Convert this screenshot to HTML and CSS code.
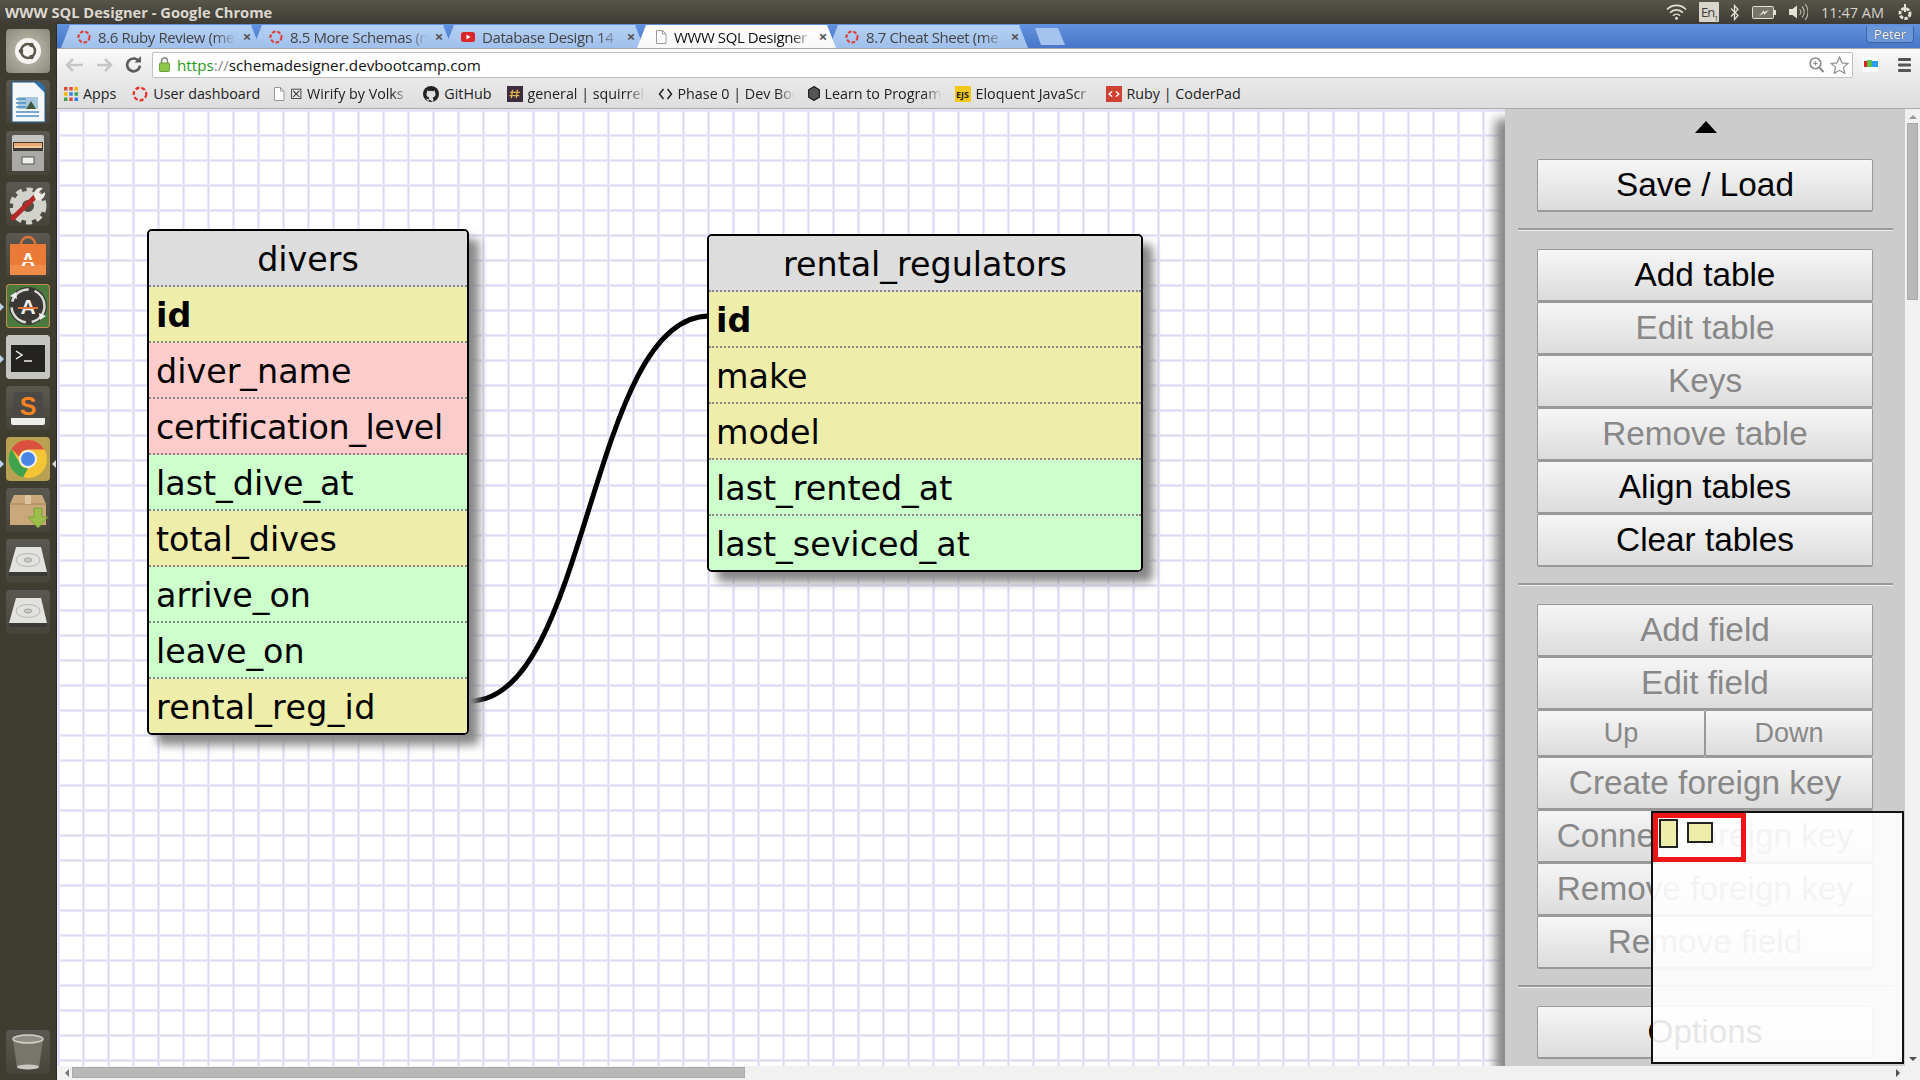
FILE: index.html
```html
<!DOCTYPE html>
<html lang="en">
<head>
  <meta charset="UTF-8">
  <title>WWW SQL Designer - Google Chrome</title>
  <link rel="stylesheet" href="styles.css">
</head>
<body>
  <!-- desktop top bar -->
  <header class="titlebar">
    <span class="title">WWW SQL Designer - Google Chrome</span>
    <div class="tray">
      <svg class="tray-wifi" width="21" height="16" viewBox="0 0 21 16"><g fill="none" stroke="#e4e0d8" stroke-width="1.600"><path d="M1 5.500a13 13 0 0 1 19 0"/><path d="M4 8.700a9 9 0 0 1 13 0"/><path d="M7 11.700a5 5 0 0 1 7 0"/></g><circle cx="10.500" cy="14.300" r="1.500" fill="#e4e0d8"/></svg>
      <span class="tray-lang">En<sub>1</sub></span>
      <svg class="tray-bt" width="9" height="17" viewBox="0 0 9 17"><path d="M1 4.500l7 7-3.500 4V1.500L8 5.500l-7 7" fill="none" stroke="#e4e0d8" stroke-width="1.300"/></svg>
      <svg class="tray-batt" width="24" height="13" viewBox="0 0 24 13"><rect x=".5" y=".5" width="21" height="12" rx="1" fill="#77746a" stroke="#e4e0d8"/><rect x="22" y="4" width="2" height="5" fill="#e4e0d8"/><path d="M7 10l5-3v2l5-5-5 2V4z" fill="#e4e0d8"/></svg>
      <svg class="tray-vol" width="20" height="18" viewBox="0 0 20 18"><path d="M1 6h3.500L9 2.500v13L4.500 12H1z" fill="#e4e0d8"/><g fill="none" stroke="#b9b5ac" stroke-width="1.100"><path d="M11.500 6a4.500 4.500 0 0 1 0 6"/><path d="M14 3.500a8 8 0 0 1 0 11"/><path d="M17 1a12 12 0 0 1 0 16"/></g></svg>
      <span class="tray-time">11:47 AM</span>
      <svg class="tray-power" width="16" height="17" viewBox="0 0 16 17"><circle cx="8" cy="9.500" r="5" fill="none" stroke="#e4e0d8" stroke-width="3" stroke-dasharray="3.500 1.300"/><rect x="7" y="0" width="2" height="8" fill="#e4e0d8"/></svg>
    </div>
  </header>

  <div class="desktop">
    <!-- launcher -->
    <nav class="launcher">
      <div class="tile tile-home">
        <svg width="44" height="44" viewBox="0 0 44 44"><circle cx="22" cy="22" r="13" fill="#f6f5f2"/><circle cx="22" cy="22" r="7" fill="none" stroke="#5a574d" stroke-width="2.500"/><g fill="#5a574d"><circle cx="15" cy="22" r="2.300"/><circle cx="25.500" cy="16" r="2.300"/><circle cx="25.500" cy="28" r="2.300"/></g></svg>
      </div>
      <div class="tile">
        <svg width="44" height="44" viewBox="0 0 44 44"><path d="M6 2h26l7 7v33H6z" fill="#f4f6f8" stroke="#1d5c93" stroke-width="1"/><path d="M28 2h6l5 5v6z" fill="#2a72ad"/><rect x="12" y="17" width="20" height="12" fill="#a5c8de"/><path d="M20 29l5-8 5 8z" fill="#3f5a40"/><g stroke="#4f8fbe" stroke-width="1.500"><path d="M10 19h10"/><path d="M10 23h10"/><path d="M10 27h10"/><path d="M10 32h23"/><path d="M10 36h23"/></g></svg>
      </div>
      <div class="tile">
        <svg width="44" height="44" viewBox="0 0 44 44"><rect x="6" y="4" width="32" height="36" rx="2" fill="#c4c4c0"/><rect x="7" y="11" width="30" height="9" fill="#3f3a33"/><rect x="8" y="12" width="28" height="3" fill="#eaa76e"/><rect x="8" y="15" width="28" height="2" fill="#f2c79a"/><rect x="6" y="20" width="32" height="20" rx="1" fill="#a9a9a6"/><rect x="16" y="26" width="12" height="7" fill="#efefec" stroke="#555" stroke-width="1"/></svg>
      </div>
      <div class="tile">
        <svg width="44" height="44" viewBox="0 0 44 44"><circle cx="22" cy="24" r="10.500" fill="none" stroke="#d2d2cd" stroke-width="9"/><circle cx="22" cy="24" r="16" fill="none" stroke="#d2d2cd" stroke-width="5" stroke-dasharray="6 4.500"/><path d="M7 36L32 12" stroke="#b32a28" stroke-width="5" stroke-linecap="round"/><path d="M28 14a7 7 0 0 1 9-8l-4 4 2 3 4-3a7 7 0 0 1-9 8z" fill="#ecebe8"/></svg>
      </div>
      <div class="tile">
        <svg width="44" height="44" viewBox="0 0 44 44"><path d="M15 11a7 7 0 0 1 14 0" fill="none" stroke="#d8733a" stroke-width="2.500"/><path d="M4 11h36v31H4z" fill="#ea7a36"/><path d="M4 32h36v10H4z" fill="#f08c4a"/><text class="tile-letter" x="22" y="33" font-size="19" fill="#fff">A</text><rect x="11" y="27" width="22" height="2" fill="#ea7a36"/></svg>
      </div>
      <div class="tile tile-updater">
        <svg width="44" height="44" viewBox="0 0 44 44"><circle cx="22" cy="22" r="19" fill="#3a3834"/><circle cx="22" cy="22" r="16.500" fill="none" stroke="#d8d8d4" stroke-width="2.500" stroke-dasharray="22 6"/><path d="M4 12l6-4 1 7z" fill="#eee"/><path d="M40 32l-6 4-1-7z" fill="#eee"/><text class="tile-letter" x="22" y="30" font-size="21" fill="#f3f1ec">A</text><rect x="12" y="23" width="20" height="2" fill="#e2733b"/></svg>
      </div>
      <div class="tile tile-terminal">
        <svg width="44" height="44" viewBox="0 0 44 44"><rect x="0" y="0" width="44" height="44" rx="4" fill="#c4c4c0"/><rect x="5" y="10" width="34" height="27" fill="#24231f"/><path d="M10 16l6 4-6 4" fill="none" stroke="#f0f0ee" stroke-width="1.500"/><path d="M18 26h8" stroke="#f0f0ee" stroke-width="1.500"/></svg>
      </div>
      <div class="tile">
        <svg width="44" height="44" viewBox="0 0 44 44"><path d="M8 6h28l3 26H5z" fill="#4a4945"/><path d="M5 32h34v5a2 2 0 0 1-2 2H7a2 2 0 0 1-2-2z" fill="#eeeeea"/><text class="tile-letter" x="22" y="29" font-size="25" fill="#f5821f">S</text></svg>
      </div>
      <div class="tile tile-chrome">
        <svg width="44" height="44" viewBox="0 0 44 44"><circle cx="22" cy="22" r="19" fill="#f4c534"/><path d="M22 3a19 19 0 0 1 16.500 9.500H22a9.500 9.500 0 0 0-9 7L5.500 12A19 19 0 0 1 22 3z" fill="#d9503f"/><path d="M5.500 12L13 25a9.500 9.500 0 0 0 9 6.500L17 40.400A19 19 0 0 1 5.500 12z" fill="#3fa34d"/><circle cx="22" cy="22" r="9" fill="#f4f4f4"/><circle cx="22" cy="22" r="7" fill="#4a86e8"/></svg>
      </div>
      <div class="tile">
        <svg width="44" height="44" viewBox="0 0 44 44"><path d="M8 7h28l4 9v21H4V16z" fill="#c9a97a"/><path d="M4 16h36" stroke="#a5855a" stroke-width="1"/><rect x="19" y="7" width="6" height="9" fill="#dcc59e"/><path d="M28 20h8v9h6L32 40 22 29h6z" fill="#9bbf4a" stroke="#7a9a35" stroke-width=".8"/></svg>
      </div>
      <div class="tile">
        <svg width="44" height="44" viewBox="0 0 44 44"><path d="M10 8h25l6 25H3z" fill="#e2e2de"/><path d="M3 33h38v4H3z" fill="#3a3935"/><ellipse cx="22" cy="21" rx="12" ry="6.500" fill="none" stroke="#b4b4b0"/><ellipse cx="22" cy="21" rx="4" ry="2" fill="#c8c8c4" stroke="#a5a5a1"/></svg>
      </div>
      <div class="tile">
        <svg width="44" height="44" viewBox="0 0 44 44"><path d="M10 8h25l6 25H3z" fill="#e2e2de"/><path d="M3 33h38v4H3z" fill="#3a3935"/><ellipse cx="22" cy="21" rx="12" ry="6.500" fill="none" stroke="#b4b4b0"/><ellipse cx="22" cy="21" rx="4" ry="2" fill="#c8c8c4" stroke="#a5a5a1"/></svg>
      </div>
      <div class="tile tile-trash">
        <svg width="44" height="44" viewBox="0 0 44 44"><path d="M7 9l4 29a18 4 0 0 0 22 0l4-29z" fill="#77766c"/><ellipse cx="22" cy="9" rx="15" ry="4" fill="#8f8e85" stroke="#d2d1ca" stroke-width="1.500"/><ellipse cx="22" cy="37" rx="11" ry="2.500" fill="#c9c8c1"/></svg>
      </div>
      <i class="pip pip-l pip-updater"></i>
      <i class="pip pip-l pip-terminal"></i>
      <i class="pip pip-l pip-chrome"></i>
      <i class="pip pip-r pip-chrome"></i>
    </nav>

    <div class="browser">
      <div class="tabstrip">
        <div class="tab">
          <svg class="spinner" width="14" height="14" viewBox="0 0 14 14"><circle cx="7" cy="7" r="5.500"/></svg>
          <span class="tab-text">8.6 Ruby Review (me</span><b class="tab-x">×</b>
        </div>
        <div class="tab">
          <svg class="spinner" width="14" height="14" viewBox="0 0 14 14"><circle cx="7" cy="7" r="5.500"/></svg>
          <span class="tab-text">8.5 More Schemas (n</span><b class="tab-x">×</b>
        </div>
        <div class="tab">
          <svg width="14" height="14" viewBox="0 0 14 14"><rect y="2" width="14" height="10" rx="2.500" fill="#d8262b"/><path d="M5.500 4.500v5l4-2.500z" fill="#fff"/></svg>
          <span class="tab-text">Database Design 14</span><b class="tab-x">×</b>
        </div>
        <div class="tab tab-active">
          <svg width="12" height="14" viewBox="0 0 12 14"><path d="M1.500.500h6l3.500 3.500v9.500h-9.500z" fill="#fff" stroke="#999"/><path d="M7.500.500V4H11" fill="none" stroke="#999"/></svg>
          <span class="tab-text">WWW SQL Designer</span><b class="tab-x">×</b>
        </div>
        <div class="tab">
          <svg class="spinner" width="14" height="14" viewBox="0 0 14 14"><circle cx="7" cy="7" r="5.500"/></svg>
          <span class="tab-text">8.7 Cheat Sheet (me</span><b class="tab-x">×</b>
        </div>
        <div class="tab-new"></div>
        <div class="profile">Peter</div>
      </div>

      <div class="toolbar">
        <svg class="nav-back" width="19" height="14" viewBox="0 0 19 14"><path d="M8 1L2 7l6 6M2 7h16" fill="none" stroke="#c6c6c6" stroke-width="2.500"/></svg>
        <svg class="nav-fwd" width="17" height="14" viewBox="0 0 17 14"><path d="M9 1l6 6-6 6M15 7H1" fill="none" stroke="#c6c6c6" stroke-width="2.500"/></svg>
        <svg class="nav-fwd" width="17" height="17" viewBox="0 0 16 16"><path d="M13 5a6 6 0 1 0 1 4" fill="none" stroke="#5b5b5b" stroke-width="2.500"/><path d="M9 6h6V0z" fill="#5b5b5b"/></svg>
        <div class="omnibox">
          <svg width="11" height="15" viewBox="0 0 11 15"><path d="M2.500 6V4a3 3 0 0 1 6 0v2" fill="none" stroke="#888" stroke-width="1.500"/><rect x=".5" y="6" width="10" height="8.500" rx="1" fill="#8ec64e" stroke="#6b9e36"/></svg>
          <span class="url"><span class="url-https">https</span><span class="url-sep">://</span>schemadesigner.devbootcamp.com</span>
          <svg class="omni-zoom" width="15" height="16" viewBox="0 0 14 15"><circle cx="6" cy="6" r="5" fill="none" stroke="#8a8a8a" stroke-width="1.500"/><path d="M4 6h4M6 4v4" stroke="#8a8a8a"/><path d="M10 10l3.500 4" stroke="#8a8a8a" stroke-width="2"/></svg>
          <svg width="19" height="18" viewBox="0 0 16 15"><path d="M8 1l2.100 4.700 5 .5-3.800 3.300 1.100 5L8 12l-4.400 2.500 1.100-5L.9 6.200l5-.5z" fill="#fff" stroke="#8a8a8a"/></svg>
        </div>
        <svg class="ext" width="15" height="15" viewBox="0 0 15 15"><rect width="15" height="15" fill="#fff"/><rect x="1" y="4" width="6" height="6" fill="#e02020"/><rect x="4" y="3" width="5" height="7" fill="#5cc04a"/><rect x="9" y="4" width="6" height="6" fill="#2aa0f0"/></svg>
        <svg class="menu" width="13" height="14" viewBox="0 0 13 14"><g fill="#555"><rect width="13" height="3" rx="1"/><rect y="5.500" width="13" height="3" rx="1"/><rect y="11" width="13" height="3" rx="1"/></g></svg>
      </div>

      <div class="bookmarks">
        <div class="bm bm-apps">
          <svg width="14" height="14" viewBox="0 0 12 12"><g fill="#e04a3a"><rect width="3" height="3"/><rect x="4.500" width="3" height="3"/></g><rect x="9" width="3" height="3" fill="#f4b400"/><rect y="4.500" width="3" height="3" fill="#f4b400"/><rect x="4.500" y="4.500" width="3" height="3" fill="#3a7de0"/><rect x="9" y="4.500" width="3" height="3" fill="#3fa34d"/><rect y="9" width="3" height="3" fill="#3fa34d"/><rect x="4.500" y="9" width="3" height="3" fill="#e04a3a"/><rect x="9" y="9" width="3" height="3" fill="#3a7de0"/></svg>
          <span>Apps</span>
        </div>
        <div class="bm">
          <svg class="spinner" width="16" height="16" viewBox="0 0 14 14"><circle cx="7" cy="7" r="5.500"/></svg>
          <span>User dashboard</span>
        </div>
        <div class="bm">
          <svg width="12" height="14" viewBox="0 0 12 14"><path d="M1.500.500h6l3.500 3.500v9.500h-9.500z" fill="#fff" stroke="#999"/><path d="M7.500.500V4H11" fill="none" stroke="#999"/></svg>
          <span class="bm-cut bm-wirify">☒ Wirify by Volks</span>
        </div>
        <div class="bm bm-github">
          <svg width="16" height="16" viewBox="0 0 14 14"><circle cx="7" cy="7" r="7" fill="#222"/><path d="M5 14v-2.500C3 12 2.500 10.500 2 10.500M9 14v-2.500c0-1-.5-1.500-.5-1.500 1.500-.2 2.500-1 2.500-3 0-.7-.3-1.200-.6-1.600.1-.5.1-1-.1-1.500-.6 0-1.100.3-1.600.6a6 6 0 0 0-3.400 0c-.5-.3-1-.6-1.600-.6-.2.500-.2 1-.1 1.500C3.300 5.800 3 6.300 3 7c0 2 1 2.800 2.500 3-.3.300-.5.800-.5 1.500" fill="#e0e0e0"/></svg>
          <span>GitHub</span>
        </div>
        <div class="bm">
          <svg width="16" height="16" viewBox="0 0 13 15" preserveAspectRatio="none"><rect width="13" height="15" fill="#3d2c3e"/><path d="M4.500 3.500l-1 8M8.500 3.500l-1 8M2.500 6h8M2 9h8" stroke="#e0b54a" stroke-width="1.100"/></svg>
          <span class="bm-cut">general | squirrel</span>
        </div>
        <div class="bm">
          <svg width="15" height="12" viewBox="0 0 14 12"><path d="M5 1L1 6l4 5M9 1l4 5-4 5" fill="none" stroke="#222" stroke-width="1.500"/></svg>
          <span class="bm-cut">Phase 0 | Dev Boc</span>
        </div>
        <div class="bm">
          <svg width="12" height="15" viewBox="0 0 11 14"><path d="M5.500.500l5 3v7l-5 3-5-3v-7z" fill="#555" stroke="#111"/></svg>
          <span class="bm-cut">Learn to Program</span>
        </div>
        <div class="bm">
          <span class="ejs">EJS</span>
          <span class="bm-cut">Eloquent JavaScr</span>
        </div>
        <div class="bm">
          <svg width="16" height="16" viewBox="0 0 13 15" preserveAspectRatio="none"><rect width="13" height="15" fill="#cf4232"/><path d="M5 5L2.500 7.500 5 10M8 5l2.500 2.500L8 10" fill="none" stroke="#fff" stroke-width="1.200"/></svg>
          <span>Ruby | CoderPad</span>
        </div>
      </div>

      <div class="viewport">
        <div class="page-row">
          <main class="canvas">
            <svg class="relations" width="1449" height="957"><path d="M413 592C532 592 532 207 652 207" fill="none" stroke="#000" stroke-width="5"/></svg>

            <div class="db-table table-divers">
              <div class="db-head">divers</div>
              <div class="db-row row-key"><b>id</b></div>
              <div class="db-row row-red">diver_name</div>
              <div class="db-row row-red tight">certification_level</div>
              <div class="db-row row-green">last_dive_at</div>
              <div class="db-row row-key">total_dives</div>
              <div class="db-row row-green">arrive_on</div>
              <div class="db-row row-green">leave_on</div>
              <div class="db-row row-key loose">rental_reg_id</div>
            </div>

            <div class="db-table table-rental">
              <div class="db-head">rental_regulators</div>
              <div class="db-row row-key"><b>id</b></div>
              <div class="db-row row-key">make</div>
              <div class="db-row row-key">model</div>
              <div class="db-row row-green">last_rented_at</div>
              <div class="db-row row-green">last_seviced_at</div>
            </div>

            <aside class="panel">
              <div class="panel-toggle"></div>
              <button class="btn">Save / Load</button>
              <hr class="sep">
              <button class="btn">Add table</button>
              <button class="btn off">Edit table</button>
              <button class="btn off">Keys</button>
              <button class="btn off">Remove table</button>
              <button class="btn">Align tables</button>
              <button class="btn">Clear tables</button>
              <hr class="sep">
              <button class="btn off">Add field</button>
              <button class="btn off">Edit field</button>
              <div class="btn-pair">
                <button class="btn off small">Up</button>
                <button class="btn off small">Down</button>
              </div>
              <button class="btn off">Create foreign key</button>
              <button class="btn off">Connect foreign key</button>
              <button class="btn off">Remove foreign key</button>
              <button class="btn off">Remove field</button>
              <hr class="sep">
              <button class="btn">Options</button>
            </aside>

            <div class="minimap">
              <div class="mini-view"></div>
              <div class="mini-table mini-a"></div>
              <div class="mini-table mini-b"></div>
            </div>
          </main>

          <div class="vscroll">
            <i class="arrow arrow-up"></i>
            <div class="vthumb"></div>
            <i class="arrow arrow-down"></i>
          </div>
        </div>
        <div class="hscroll">
          <i class="arrow arrow-left"></i>
          <div class="hthumb"></div>
          <i class="arrow arrow-right"></i>
        </div>
      </div>
    </div>
  </div>
</body>
</html>
```

FILE: styles.css
```css
* {
  box-sizing: border-box;
}
html, body {
  margin: 0;
  height: 100%;
}
body {
  width: 1920px;
  height: 1080px;
  overflow: hidden;
  display: flex;
  flex-direction: column;
  font-family: "Open Sans", sans-serif;
}

/* Desktop top bar */
.titlebar {
  height: 24px;
  flex: none;
  display: flex;
  align-items: center;
  justify-content: space-between;
  padding-left: 5px;
  background: linear-gradient(#57544a, #3d3b33);
}
.title {
  font-size: 14.7px;
  font-weight: 700;
  color: #dcd8ce;
}
.tray {
  display: flex;
  align-items: center;
  padding-right: 7px;
}
.tray-wifi {
  margin-right: 12px;
}
.tray-lang {
  width: 20px;
  height: 20px;
  margin-right: 11px;
  background: #d9d5cc;
  color: #3d3b33;
  border-radius: 1px;
  font-size: 13px;
  line-height: 20px;
  text-align: center;
  white-space: nowrap;
  letter-spacing: -1px;
}
.tray-lang sub {
  font-size: 7px;
  line-height: 0;
}
.tray-bt {
  margin-right: 13px;
}
.tray-batt {
  margin-right: 12px;
}
.tray-vol {
  margin-right: 13px;
}
.tray-time {
  font-size: 14.5px;
  color: #d6d2c9;
  margin-right: 13px;
}

.desktop {
  flex: 1;
  display: flex;
  min-height: 0;
}

/* Launcher */
.launcher {
  position: relative;
  width: 57px;
  flex: none;
  display: flex;
  flex-direction: column;
  align-items: flex-start;
  gap: 7px;
  padding: 5px 0 0 6px;
  background: #3f3c30;
  border-right: 1px solid #2d2b24;
}
.tile {
  width: 44px;
  height: 44px;
  flex: none;
  border-radius: 4px;
  background: linear-gradient(#5a5850, #46443a);
  overflow: hidden;
}
.tile-letter {
  font-family: "Liberation Sans", sans-serif;
  font-weight: 700;
  text-anchor: middle;
}
.tile-home {
  background: radial-gradient(circle, #c7c5b8, #8a8877);
}
.tile-updater {
  background: #4a7a3c;
  box-shadow: inset 0 0 0 1px #c98a50;
}
.tile-chrome {
  background: #b8a150;
}
.tile-terminal {
  background: #c4c4c0;
}
.tile-trash {
  margin-top: auto;
  margin-bottom: 6px;
}
.pip {
  position: absolute;
  width: 0;
  height: 0;
  border: 4px solid transparent;
}
.pip-l {
  left: 0;
  border-left-color: #b9d4e8;
}
.pip-r {
  right: 0;
  border-right-color: #d8d8d2;
}
.pip-updater {
  top: 279px;
}
.pip-terminal {
  top: 331px;
}
.pip-chrome {
  top: 436px;
}

.browser {
  flex: 1;
  min-width: 0;
  display: flex;
  flex-direction: column;
}

/* Tabs */
.tabstrip {
  position: relative;
  height: 24px;
  flex: none;
  display: flex;
  align-items: flex-end;
  padding-left: 1px;
  background: linear-gradient(#6292de, #4876c8);
}
.tab {
  width: 205px;
  height: 23px;
  margin-right: -13px;
  flex: none;
  display: flex;
  align-items: center;
  gap: 7px;
  padding: 0 12px 0 19px;
  background: linear-gradient(#b5d0f3, #9fc0ec);
  clip-path: polygon(0 100%, 3px 100%, 12px 0, 193px 0, 202px 100%, 205px 100%);
  color: #444;
  font-size: 15px;
  letter-spacing: -0.4px;
}
.tab svg {
  flex: none;
}
.tab-active {
  position: relative;
  z-index: 1;
  padding-left: 21px;
  background: linear-gradient(#fff, #f8f8f8);
  color: #111;
}
.tab-text {
  flex: 1;
  min-width: 0;
  overflow: hidden;
  white-space: nowrap;
  -webkit-mask-image: linear-gradient(90deg, #000 85%, transparent);
  mask-image: linear-gradient(90deg, #000 85%, transparent);
}
.tab-x {
  font-size: 15px;
  line-height: 1;
  color: #555;
}
.tab-new {
  width: 30px;
  height: 17px;
  margin: 0 0 3px 17px;
  background: #a4c3ee;
  clip-path: polygon(0 0, 23px 0, 30px 100%, 6px 100%);
}
.profile {
  position: absolute;
  right: 6px;
  top: 2px;
  width: 48px;
  height: 17px;
  border: 1px solid #3d64a8;
  border-top: 0;
  border-radius: 0 0 4px 4px;
  background: #6a96da;
  color: #fff;
  font-size: 13px;
  line-height: 16px;
  text-align: center;
  text-shadow: 0 0 1px #222;
}
.spinner circle {
  fill: none;
  stroke: #e3362c;
  stroke-width: 2;
  stroke-dasharray: 3.500 1.800;
}

/* Address bar */
.toolbar {
  height: 32px;
  flex: none;
  display: flex;
  align-items: center;
  padding-left: 8px;
  background: linear-gradient(#fafafa, #e8e8e8);
  border-top: 1px solid #a9a9a9;
}
.nav-fwd {
  margin-left: 12px;
}
.omnibox {
  width: 1701px;
  height: 26px;
  margin-left: 10px;
  display: flex;
  align-items: center;
  padding: 0 3px 0 6px;
  background: #fff;
  border: 1px solid #c0c0c0;
  border-radius: 2px;
}
.url {
  flex: 1;
  margin: 1px 0 0 7px;
  font-size: 15.2px;
  color: #111;
}
.url-https {
  color: #1e9a16;
}
.url-sep {
  color: #888;
}
.omni-zoom {
  margin-right: 6px;
}
.ext {
  margin-left: 10px;
}
.menu {
  margin-left: 20px;
}

/* Bookmarks */
.bookmarks {
  height: 29px;
  flex: none;
  display: flex;
  align-items: center;
  gap: 13px;
  padding: 0 0 1px 7px;
  background: linear-gradient(#e8e8e8, #dedede);
  border-bottom: 1px solid #aaa;
  font-size: 14.3px;
  color: #222;
}
.bm {
  display: flex;
  align-items: center;
  gap: 5px;
  white-space: nowrap;
}
.bm-apps {
  margin-right: 3px;
}
.bm-github {
  margin-right: 2px;
}
.bm-cut {
  width: 117px;
  overflow: hidden;
  -webkit-mask-image: linear-gradient(90deg, #000 85%, transparent);
  mask-image: linear-gradient(90deg, #000 85%, transparent);
}
.bm-wirify {
  width: 120px;
}
.ejs {
  width: 16px;
  height: 16px;
  background: #f5c518;
  color: #222;
  font-size: 9px;
  font-weight: 700;
  line-height: 17px;
  text-align: center;
}

/* Page */
.viewport {
  flex: 1;
  min-height: 0;
  display: flex;
  flex-direction: column;
}
.page-row {
  flex: 1;
  min-height: 0;
  display: flex;
}
.canvas {
  position: relative;
  flex: 1;
  min-width: 0;
  overflow: hidden;
  background-color: #fff;
  background-image:
    linear-gradient(90deg, #e9e9f9 0, #e9e9f9 1px, #dbdbf3 1px, #dbdbf3 2px, #e9e9f9 2px, #e9e9f9 3px, transparent 3px),
    linear-gradient(#e9e9f9 0, #e9e9f9 1px, #dbdbf3 1px, #dbdbf3 2px, #e9e9f9 2px, #e9e9f9 3px, transparent 3px);
  background-size: 25px 25px;
}
.relations {
  position: absolute;
  left: 0;
  top: 0;
}

/* Schema tables */
.db-table {
  position: absolute;
  border: 2px solid #000;
  border-radius: 5px;
  overflow: hidden;
  box-shadow: 10px 10px 10px #888;
  font-family: "DejaVu Sans", sans-serif;
  font-size: 33.33px;
  color: #000;
}
.table-divers {
  left: 90px;
  top: 120px;
  width: 322px;
}
.table-rental {
  left: 650px;
  top: 125px;
  width: 436px;
}
.db-head {
  height: 56px;
  padding-top: 2px;
  line-height: 54px;
  text-align: center;
  background: #ddd;
  border-bottom: 2px dotted #888;
}
.db-row {
  height: 56px;
  padding: 2px 0 0 7px;
  line-height: 54px;
  border-bottom: 2px dotted #888;
  white-space: nowrap;
}
.db-row:last-child {
  height: 54px;
  border-bottom: 0;
}
.row-key {
  background: #eea;
}
.row-red {
  background: #fcc;
}
.row-green {
  background: #cfc;
}
.tight {
  letter-spacing: -0.4px;
}
.loose {
  letter-spacing: 0.3px;
}

/* Side panel */
.panel {
  position: absolute;
  right: 0;
  top: 0;
  bottom: 0;
  width: 400px;
  padding: 12px 0 0 32px;
  overflow: hidden;
  background: #ccc;
  box-shadow: -10px 10px 10px #888;
}
.panel-toggle {
  width: 0;
  height: 0;
  margin: 0 0 26px 158px;
  border: solid transparent;
  border-width: 0 11px 12px;
  border-bottom-color: #000;
}
.btn {
  display: block;
  width: 336px;
  height: 53px;
  padding: 0;
  border: 1px solid #999;
  border-bottom: 2px solid #999;
  border-radius: 2px;
  background: linear-gradient(#f6f6f6, #dcdcdc);
  font-family: "Liberation Sans", sans-serif;
  font-size: 33.33px;
  color: #000;
  white-space: nowrap;
}
.btn.off {
  color: #888;
}
.btn-pair {
  display: flex;
  width: 336px;
}
.btn.small {
  width: 50%;
  height: 47px;
  font-size: 27px;
}
.sep {
  width: 375px;
  height: 3px;
  margin: 16px 0 18px -19px;
  border: 0;
  border-top: 2px solid #999;
  border-bottom: 1px solid #eee;
}

/* Overview map */
.minimap {
  position: absolute;
  right: 1px;
  bottom: 2px;
  width: 253px;
  height: 253px;
  border: 2px solid #111;
  background: rgba(255, 255, 255, 0.9);
}
.mini-view {
  position: absolute;
  left: 0;
  top: 0;
  width: 93px;
  height: 49px;
  border: 5px solid #f01515;
}
.mini-table {
  position: absolute;
  border: 2px solid #222;
  background: #eea;
}
.mini-a {
  left: 6px;
  top: 6px;
  width: 19px;
  height: 29px;
}
.mini-b {
  left: 34px;
  top: 9px;
  width: 26px;
  height: 21px;
}

/* Browser scrollbars */
.vscroll {
  position: relative;
  width: 15px;
  flex: none;
  background: #f1f1f1;
}
.vthumb {
  position: absolute;
  left: 2px;
  top: 14px;
  width: 11px;
  height: 177px;
  background: #b8b8b8;
  border: 1px solid #aaa;
}
.hscroll {
  position: relative;
  height: 14px;
  flex: none;
  background: #f1f1f1;
}
.hthumb {
  position: absolute;
  left: 15px;
  top: 1px;
  width: 673px;
  height: 11px;
  background: #b8b8b8;
  border: 1px solid #aaa;
}
.arrow {
  position: absolute;
  width: 0;
  height: 0;
  border: 4px solid transparent;
}
.arrow-up {
  left: 4px;
  top: 2px;
  border-bottom-color: #999;
}
.arrow-down {
  left: 4px;
  bottom: 1px;
  border-top-color: #505050;
}
.arrow-left {
  left: 4px;
  top: 3px;
  border-right-color: #777;
}
.arrow-right {
  right: 16px;
  top: 3px;
  border-left-color: #505050;
}
```
